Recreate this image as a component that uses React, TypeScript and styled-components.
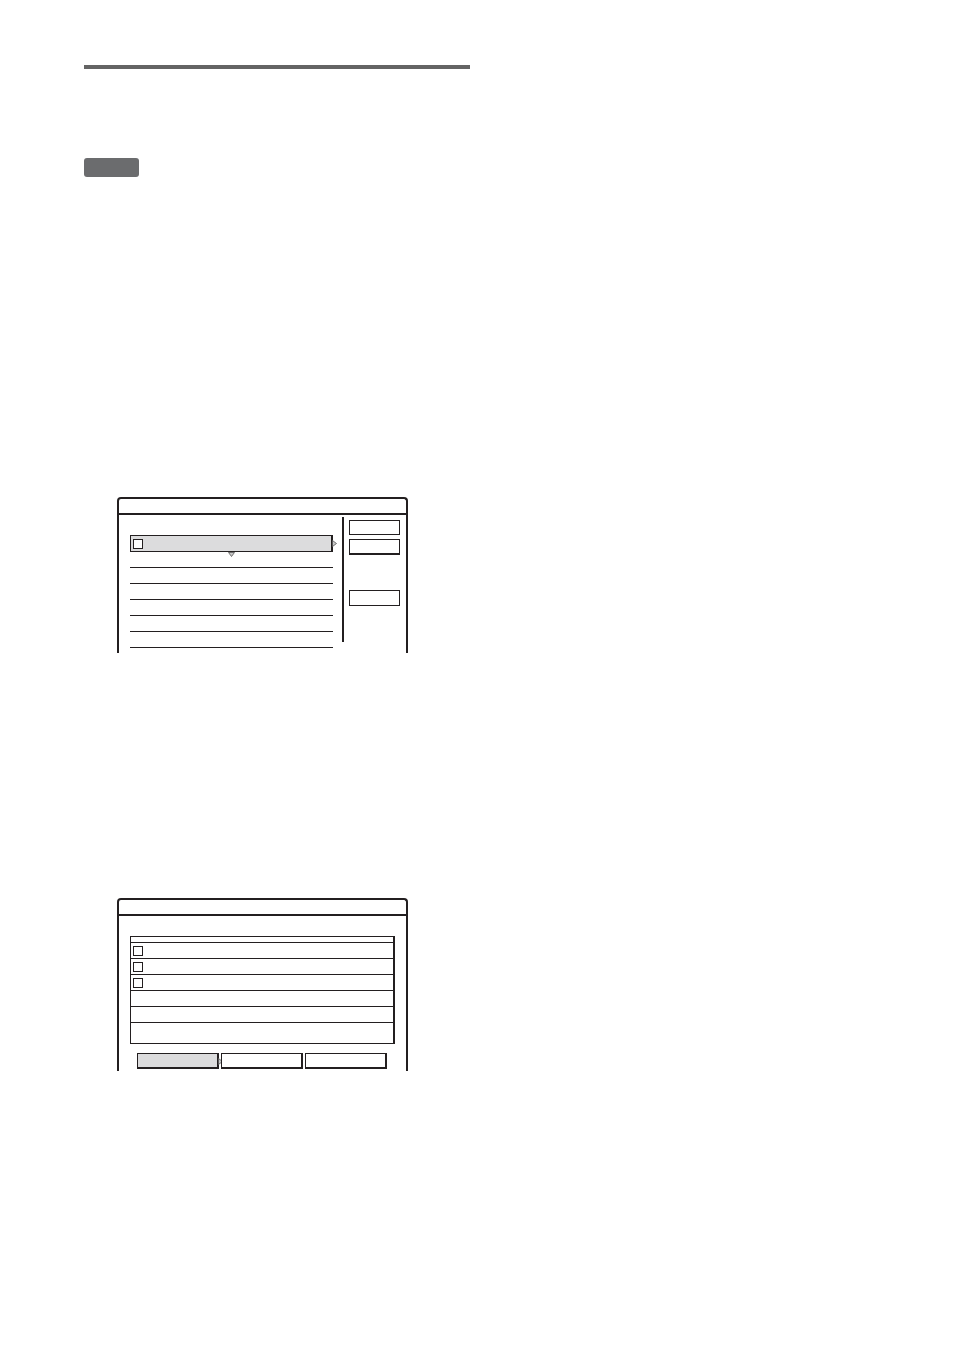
import React from 'react';
import styled, { createGlobalStyle } from 'styled-components';

const GlobalStyle = createGlobalStyle`
  html, body { margin: 0; padding: 0; background: #ffffff; }
  body { font-family: 'Liberation Sans', Arial, sans-serif; }
`;

const Page = styled.div`
  width: 954px;
  height: 1352px;
  padding: 65px 0 0 84px;
  box-sizing: border-box;
  display: flex;
  flex-direction: column;
  align-items: flex-start;
`;

const HeaderBar = styled.div`
  width: 386px;
  height: 4px;
  background: #646464;
`;

const Badge = styled.div`
  margin-top: 89px;
  width: 55px;
  height: 19px;
  border-radius: 3px;
  background: #6b6c6e;
`;

const Screen = styled.div<{ $top: number; $height: number }>`
  margin-top: ${p => p.$top}px;
  margin-left: 33px;
  width: 291px;
  height: ${p => p.$height}px;
  box-sizing: border-box;
  border: 2px solid #231f20;
  border-bottom: none;
  border-radius: 4px 4px 0 0;
  display: flex;
  flex-direction: column;
`;

const TitleArea = styled.div`
  height: 14px;
  border-bottom: 2px solid #231f20;
  flex-shrink: 0;
`;

const ListBody = styled.div`
  flex: 1;
  display: flex;
  padding: 2px 0 0 11px;
`;

const ListColumn = styled.div`
  width: 203px;
  padding-top: 18px;
  display: flex;
  flex-direction: column;
`;

const HighlightRow = styled.div`
  position: relative;
  height: 17px;
  box-sizing: border-box;
  background: #dcdcdd;
  border: 1px solid #231f20;
  border-right-width: 2px;
  display: flex;
  align-items: center;
  padding-left: 2px;
`;

const CheckBox = styled.span`
  display: inline-block;
  width: 8px;
  height: 8px;
  border: 1px solid #231f20;
  background: #ffffff;
`;

const Line = styled.div`
  height: 15px;
  border-bottom: 1px solid #231f20;
`;

const ArrowRight = styled.svg`
  position: absolute;
  right: -6px;
  top: 4px;
`;

const ArrowDown = styled.svg`
  position: absolute;
  left: 97px;
  bottom: -6px;
`;

const Divider = styled.div`
  margin-left: 9px;
  width: 2px;
  height: 125px;
  background: #231f20;
`;

const ButtonColumn = styled.div`
  margin-left: 5px;
  display: flex;
  flex-direction: column;
  padding-top: 3px;
`;

const SideButton = styled.div<{ $gap: number; $h: number; $active?: boolean }>`
  margin-top: ${p => p.$gap}px;
  width: 51px;
  height: ${p => p.$h}px;
  box-sizing: border-box;
  border: 1px solid #231f20;
  border-bottom-width: ${p => (p.$active ? 2 : 1)}px;
`;

const TableBody = styled.div`
  flex: 1;
  display: flex;
  flex-direction: column;
  padding: 20px 0 0 11px;
`;

const Table = styled.div`
  width: 265px;
  box-sizing: border-box;
  border: 1px solid #231f20;
  border-right-width: 2px;
  display: flex;
  flex-direction: column;
`;

const TableStrip = styled.div<{ $h: number }>`
  height: ${p => p.$h}px;
`;

const TableRow = styled.div`
  height: 16px;
  box-sizing: border-box;
  border-top: 1px solid #231f20;
  display: flex;
  align-items: center;
  padding-left: 2px;
  &:last-of-type {
    height: 17px;
    border-bottom: 1px solid #231f20;
  }
`;

const ButtonRow = styled.div`
  margin-top: 9px;
  margin-left: 7px;
  display: flex;
  gap: 2px;
`;

const TabButton = styled.div<{ $active?: boolean }>`
  position: relative;
  width: 82px;
  height: 16px;
  box-sizing: border-box;
  border: 1px solid #231f20;
  border-right-width: 2px;
  border-bottom-width: 2px;
  background: ${p => (p.$active ? '#dcdcdd' : '#ffffff')};
`;

const TabArrow = styled.svg`
  position: absolute;
  right: -6px;
  top: 4px;
`;

const arrowRight = <path d="M0.5 0.5 L4.5 3.5 L0.5 6.5 Z" fill="#c8c8c8" stroke="#555" strokeWidth="0.8" />;
const arrowDown = <path d="M0.5 0.5 L6.5 0.5 L3.5 4.5 Z" fill="#c8c8c8" stroke="#555" strokeWidth="0.8" />;

const App = () => {
  return (
    <>
      <GlobalStyle />
      <Page>
        <HeaderBar />
        <Badge />

        <Screen $top={320} $height={156}>
          <TitleArea />
          <ListBody>
            <ListColumn>
              <HighlightRow>
                <CheckBox />
                <ArrowRight width="5" height="7" viewBox="0 0 5 7">{arrowRight}</ArrowRight>
                <ArrowDown width="7" height="5" viewBox="0 0 7 5">{arrowDown}</ArrowDown>
              </HighlightRow>
              <Line />
              <Line />
              <Line />
              <Line />
              <Line />
              <Line />
            </ListColumn>
            <Divider />
            <ButtonColumn>
              <SideButton $gap={0} $h={15} />
              <SideButton $gap={4} $h={16} $active />
              <SideButton $gap={35} $h={16} />
            </ButtonColumn>
          </ListBody>
        </Screen>

        <Screen $top={245} $height={173}>
          <TitleArea />
          <TableBody>
            <Table>
              <TableStrip $h={5} />
              <TableRow><CheckBox /></TableRow>
              <TableRow><CheckBox /></TableRow>
              <TableRow><CheckBox /></TableRow>
              <TableRow />
              <TableRow />
              <TableRow />
              <TableStrip $h={5} />
            </Table>
            <ButtonRow>
              <TabButton $active>
                <TabArrow width="5" height="7" viewBox="0 0 5 7">{arrowRight}</TabArrow>
              </TabButton>
              <TabButton />
              <TabButton />
            </ButtonRow>
          </TableBody>
        </Screen>
      </Page>
    </>
  );
};

export default App;
